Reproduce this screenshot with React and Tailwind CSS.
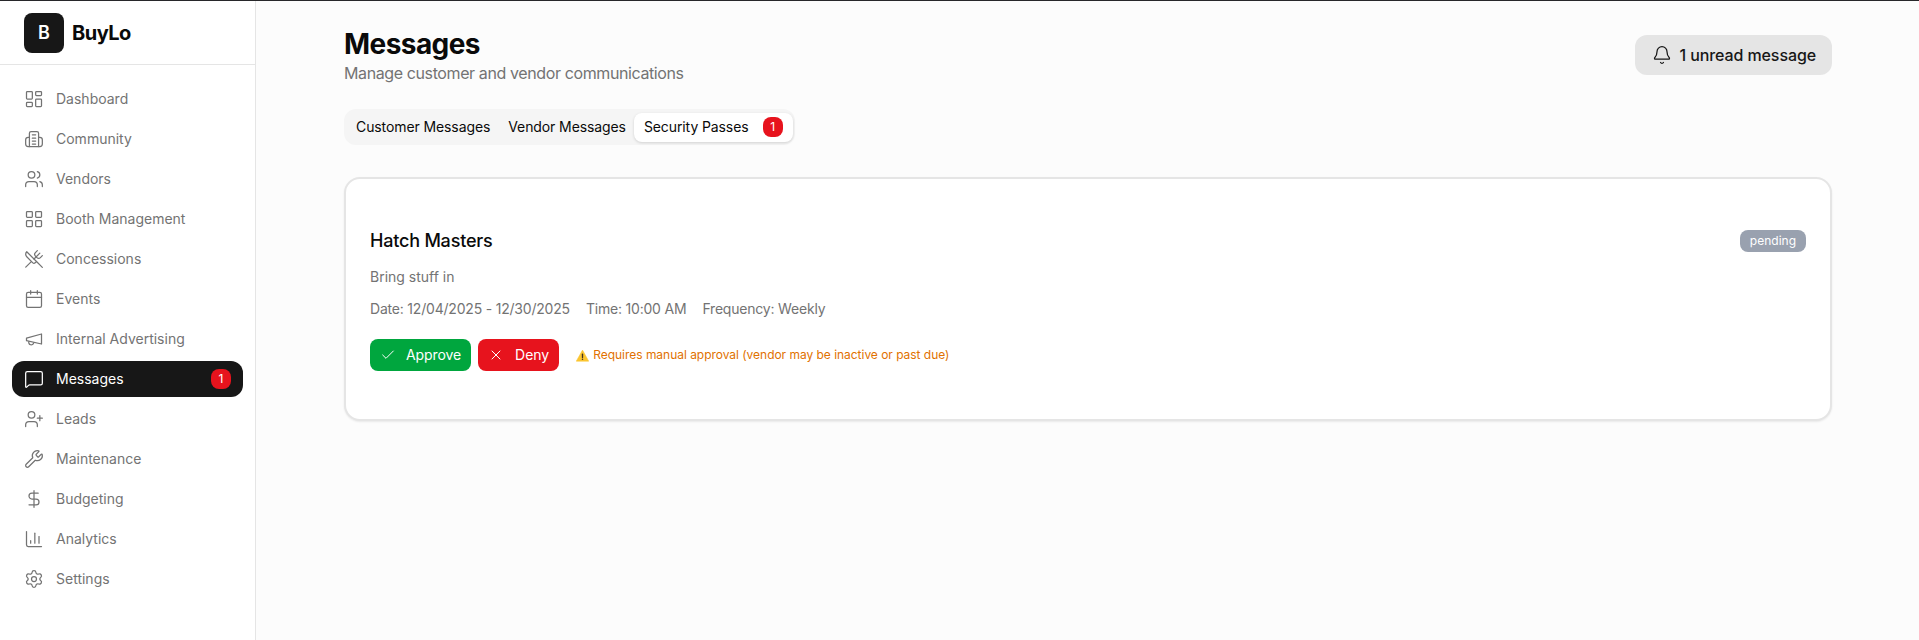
import React from "react";
import {
  LayoutDashboard,
  Users,
  LayoutGrid,
  UtensilsCrossed,
  Calendar,
  MessageSquare,
  UserPlus,
  Wrench,
  DollarSign,
  ChartColumn,
  Settings,
  Bell,
  Check,
  X,
} from "lucide-react";

// older lucide megaphone, the current one has a different outline
const MegaphoneIcon = ({ size, strokeWidth, className }) => (
  <svg
    width={size}
    height={size}
    viewBox="0 0 24 24"
    fill="none"
    stroke="currentColor"
    strokeWidth={strokeWidth}
    strokeLinecap="round"
    strokeLinejoin="round"
    className={className}
  >
    <path d="m3 11 18-5v12L3 14v-3z" />
    <path d="M11.6 16.8a3 3 0 1 1-5.8-1.6" />
  </svg>
);

// page with text lines and a wing on each side
const CommunityIcon = ({ size, strokeWidth, className }) => (
  <svg
    width={size}
    height={size}
    viewBox="0 0 24 24"
    fill="none"
    stroke="currentColor"
    strokeWidth={strokeWidth}
    strokeLinecap="round"
    strokeLinejoin="round"
    className={className}
  >
    <path d="M6.5 21V5a2 2 0 0 1 2-2h7a2 2 0 0 1 2 2v16" />
    <path d="M6.5 10H5a3 3 0 0 0-3 3v5a3 3 0 0 0 3 3h14a3 3 0 0 0 3-3v-5a3 3 0 0 0-3-3h-1.500" />
    <path d="M10 7h4" />
    <path d="M10 11h4" />
    <path d="M10 14.500h4" />
    <path d="M10 18h4" />
  </svg>
);

const navItems = [
  { label: "Dashboard", icon: LayoutDashboard },
  { label: "Community", icon: CommunityIcon },
  { label: "Vendors", icon: Users },
  { label: "Booth Management", icon: LayoutGrid },
  { label: "Concessions", icon: UtensilsCrossed },
  { label: "Events", icon: Calendar },
  { label: "Internal Advertising", icon: MegaphoneIcon },
  { label: "Messages", icon: MessageSquare, active: true, badge: 1 },
  { label: "Leads", icon: UserPlus },
  { label: "Maintenance", icon: Wrench },
  { label: "Budgeting", icon: DollarSign },
  { label: "Analytics", icon: ChartColumn },
  { label: "Settings", icon: Settings },
];

const Sidebar = () => (
  <aside className="w-[256px] shrink-0 bg-white border-r border-[#e5e5e5]">
    <div className="h-[64px] flex items-center gap-2 px-6 border-b border-[#e5e5e5]">
      <div className="w-10 h-10 rounded-lg bg-[#171717] text-white flex items-center justify-center font-semibold text-lg">
        B
      </div>
      <span className="text-xl font-bold tracking-[-0.5px] text-[#0a0a0a]">BuyLo</span>
    </div>
    <nav className="px-3 pt-4 flex flex-col gap-1">
      {navItems.map((item) => {
        const Icon = item.icon;
        return (
          <div
            key={item.label}
            className={`h-9 flex items-center gap-3 px-3 rounded-xl text-sm ${
              item.active ? "bg-[#171717] text-white" : "text-[#737373]"
            }`}
          >
            <Icon size={20} strokeWidth={1.5} className="shrink-0" />
            <span className="flex-1">{item.label}</span>
            {item.badge && (
              <span className="w-5 h-5 rounded-lg bg-[#e7131d] text-white text-xs flex items-center justify-center">
                {item.badge}
              </span>
            )}
          </div>
        );
      })}
    </nav>
  </aside>
);

const WarningIcon = () => (
  <svg width="13" height="13" viewBox="0 0 24 24" className="shrink-0">
    <path d="M12 2 L23.500 22.500 H0.500 Z" fill="#fbc531" stroke="#fbc531" strokeWidth="1" strokeLinejoin="round" />
    <rect x="10.800" y="8.500" width="2.400" height="8" rx="1" fill="#3f3222" />
    <circle cx="12" cy="19" r="1.400" fill="#3f3222" />
  </svg>
);

const PassCard = () => (
  <div className="mt-8 h-[244px] bg-white border-2 border-[#e5e5e5] rounded-2xl shadow-[0_1px_2px_rgba(0,0,0,0.08)] px-6 pt-[48px]">
    <div className="flex items-center justify-between h-7">
      <h3 className="text-lg font-medium tracking-[-0.2px] text-[#0a0a0a]">Hatch Masters</h3>
      <span className="h-[22px] px-[10px] rounded-lg bg-[#99a1af] text-white text-xs flex items-center">
        pending
      </span>
    </div>
    <p className="mt-3 text-sm text-[#737373]">Bring stuff in</p>
    <div className="mt-3 flex gap-4 text-sm tracking-[-0.2px] text-[#737373]">
      <span>Date: 12/04/2025 - 12/30/2025</span>
      <span>Time: 10:00 AM</span>
      <span>Frequency: Weekly</span>
    </div>
    <div className="mt-5 flex items-center gap-[7px]">
      <button className="h-8 px-[10px] rounded-lg bg-[#00a63e] text-white text-sm tracking-[-0.1px] flex items-center gap-[10px]">
        <Check size={16} strokeWidth={1.5} />
        Approve
      </button>
      <button className="h-8 px-[10px] rounded-lg bg-[#e7131d] text-white text-sm flex items-center gap-[11px]">
        <X size={16} strokeWidth={1.5} />
        Deny
      </button>
      <span className="ml-[10px] flex items-center gap-1 text-xs tracking-[-0.03px] text-[#e17100]">
        <WarningIcon />
        Requires manual approval (vendor may be inactive or past due)
      </span>
    </div>
  </div>
);

export default function App() {
  return (
    <div className="h-[640px] overflow-hidden flex flex-col bg-[#fcfcfc] font-['Inter',sans-serif]">
      <div className="h-px bg-[#27272a] shrink-0"></div>
      <div className="flex flex-1 min-h-0">
        <Sidebar />
        <main className="flex-1 min-w-0">
          <div className="w-[1488px] ml-[88px] pt-[26px]">
            <div className="flex items-start justify-between">
              <div>
                <h1 className="text-[28px] font-bold tracking-[-0.56px] text-[#0a0a0a] h-[34px] leading-[34px]">Messages</h1>
                <p className="text-base tracking-[-0.39px] text-[#737373]">Manage customer and vendor communications</p>
              </div>
              <div className="mt-[8px] h-10 pl-[17px] pr-4 rounded-xl bg-[#e5e5e5] text-[#171717] font-medium tracking-[-0.1px] flex items-center gap-2">
                <Bell size={20} strokeWidth={1.5} />
                1 unread message
              </div>
            </div>
            <div className="mt-6 h-9 w-[451px] p-1 rounded-xl bg-[#f5f5f5] flex items-center text-sm tracking-[-0.1px] whitespace-nowrap text-[#0a0a0a]">
              <div className="pl-2 pr-[18px] h-7 flex items-center">Customer Messages</div>
              <div className="pr-2 h-7 flex items-center">Vendor Messages</div>
              <div className="h-[29px] px-[10px] rounded-lg bg-white shadow-[0_1px_3px_rgba(0,0,0,0.15)] flex items-center gap-[14px]">
                Security Passes
                <span className="w-5 h-5 rounded-lg bg-[#e7131d] text-white text-xs flex items-center justify-center">
                  1
                </span>
              </div>
            </div>
            <PassCard />
          </div>
        </main>
      </div>
    </div>
  );
}
